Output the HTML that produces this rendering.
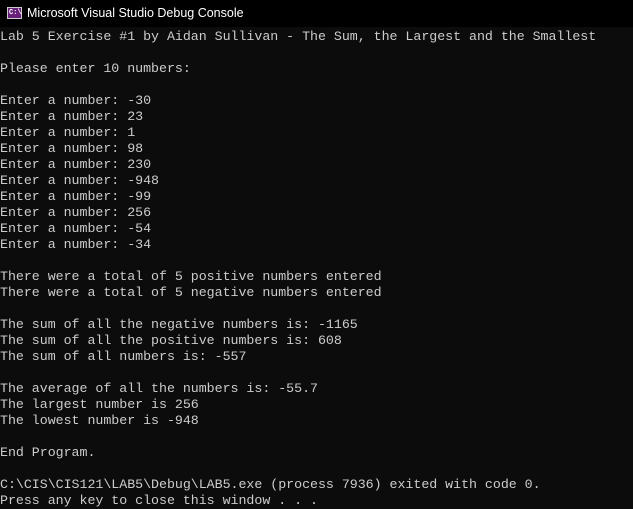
<!DOCTYPE html>
<html><head><style>
body{margin:0;width:633px;height:508px;background:#0c0c0c;overflow:hidden}
.t{height:27px;background:#000;position:relative;color:#fff;font:12.5px "Liberation Sans",sans-serif}
.t span{position:absolute;left:27px;top:6px}
.ic{position:absolute;left:7px;top:7px;width:15px;height:12px;background:#68217a;border:1px solid #ccc;box-sizing:border-box;font:bold 7px "Liberation Mono",monospace;color:#fff;line-height:10px;text-indent:1px}
pre{margin:0;position:absolute;left:0;top:29px;font:13.3px/16px "Liberation Mono",monospace;color:#cccccc;letter-spacing:-0.03px}
</style></head><body>
<div class="t"><div class="ic">C:\</div><span>Microsoft Visual Studio Debug Console</span></div>
<pre>Lab 5 Exercise #1 by Aidan Sullivan - The Sum, the Largest and the Smallest

Please enter 10 numbers:

Enter a number: -30
Enter a number: 23
Enter a number: 1
Enter a number: 98
Enter a number: 230
Enter a number: -948
Enter a number: -99
Enter a number: 256
Enter a number: -54
Enter a number: -34

There were a total of 5 positive numbers entered
There were a total of 5 negative numbers entered

The sum of all the negative numbers is: -1165
The sum of all the positive numbers is: 608
The sum of all numbers is: -557

The average of all the numbers is: -55.7
The largest number is 256
The lowest number is -948

End Program.

C:\CIS\CIS121\LAB5\Debug\LAB5.exe (process 7936) exited with code 0.
Press any key to close this window . . .</pre>
</body></html>
